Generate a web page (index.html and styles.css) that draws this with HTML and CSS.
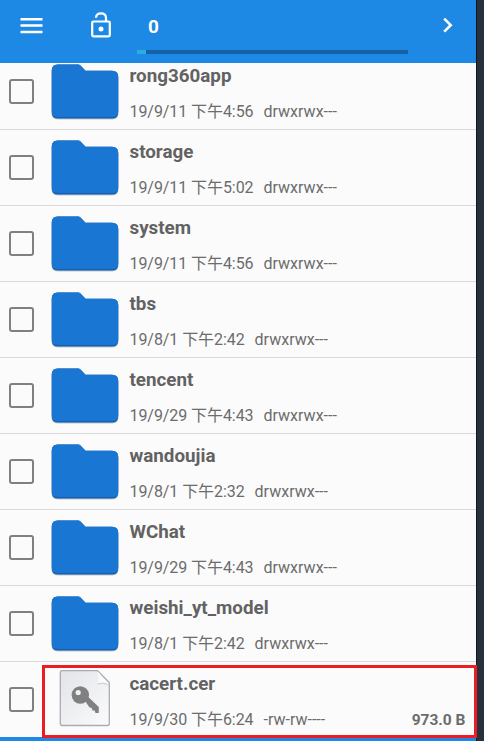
FILE: index.html
```html
<!DOCTYPE html>
<html lang="zh-CN">
<head>
<meta charset="utf-8">
<title>Files</title>
<link rel="stylesheet" href="styles.css">
</head>
<body>
<svg class="defs" aria-hidden="true">
  <defs>
    <linearGradient id="paper" x1="0" y1="0" x2="1" y2="1"><stop offset="0" stop-color="#e2e4e8"/><stop offset="1" stop-color="#fbfbfc"/></linearGradient>
    <symbol id="folder" viewBox="0 0 70 58">
      <path d="M7 2.600H28.500Q30 2.600 31 3.600L35.800 8.600H62.500Q68.500 8.600 68.500 14.600V50.500Q68.500 56.400 62.500 56.400H7.500Q1.500 56.400 1.500 50.500V8Q1.500 2.600 7 2.600Z" fill="#8aa0b8" opacity=".55"/>
      <path d="M7 1.500H28Q29.500 1.500 30.500 2.500L35.500 7.800H62Q68.200 7.800 68.200 14V49.500Q68.200 55.500 62 55.500H8Q1.800 55.500 1.800 49.500V7.500Q1.800 1.500 7.500 1.500Z" fill="#1459a3"/>
      <path d="M7.500 1.500H28Q29.500 1.500 30.500 2.500L35.500 7.800H62Q68.200 7.800 68.200 14V48.200Q68.200 54.200 62 54.200H8Q1.800 54.200 1.800 48.200V7.500Q1.800 1.500 7.500 1.500Z" fill="#1976d2"/>
    </symbol>
  </defs>
</svg>
<div class="screen">
  <header class="bar">
    <svg class="menu" viewBox="0 0 24 18"><path d="M.5 2.300H22.500M.5 8.500H22.500M.5 14.900H22.500" stroke="#fff" stroke-width="2.500"/></svg>
    <svg class="lock" viewBox="0 0 22 28"><rect x="2.200" y="10.500" width="17.600" height="14.800" rx="1.200" fill="none" stroke="#fff" stroke-width="2.200"/><path d="M6 6.800Q6.200 2.300 11 2.300Q16 2.300 16 7V10" fill="none" stroke="#fff" stroke-width="2.200"/><circle cx="11" cy="18" r="2.500" fill="#fff"/></svg>
    <div class="status"><span class="count">0</span><div class="track"><div class="fill"></div></div></div>
    <svg class="next" viewBox="0 0 12 18"><path d="M2.200 2.700L8.700 9.200L2.200 15.700" fill="none" stroke="#fff" stroke-width="2.600"/></svg>
  </header>
  <main class="list">
    <div class="row"><i class="check"></i><svg class="icon"><use href="#folder"/></svg><div class="text"><div class="name">rong360app</div><div class="meta"><span class="date">19/9/11 下午4:56</span><span>drwxrwx---</span></div></div></div>
    <div class="row"><i class="check"></i><svg class="icon"><use href="#folder"/></svg><div class="text"><div class="name">storage</div><div class="meta"><span class="date">19/9/11 下午5:02</span><span>drwxrwx---</span></div></div></div>
    <div class="row"><i class="check"></i><svg class="icon"><use href="#folder"/></svg><div class="text"><div class="name">system</div><div class="meta"><span class="date">19/9/11 下午4:56</span><span>drwxrwx---</span></div></div></div>
    <div class="row"><i class="check"></i><svg class="icon"><use href="#folder"/></svg><div class="text"><div class="name">tbs</div><div class="meta"><span class="date">19/8/1 下午2:42</span><span>drwxrwx---</span></div></div></div>
    <div class="row"><i class="check"></i><svg class="icon"><use href="#folder"/></svg><div class="text"><div class="name">tencent</div><div class="meta"><span class="date">19/9/29 下午4:43</span><span>drwxrwx---</span></div></div></div>
    <div class="row"><i class="check"></i><svg class="icon"><use href="#folder"/></svg><div class="text"><div class="name">wandoujia</div><div class="meta"><span class="date">19/8/1 下午2:32</span><span>drwxrwx---</span></div></div></div>
    <div class="row"><i class="check"></i><svg class="icon"><use href="#folder"/></svg><div class="text"><div class="name">WChat</div><div class="meta"><span class="date">19/9/29 下午4:43</span><span>drwxrwx---</span></div></div></div>
    <div class="row"><i class="check"></i><svg class="icon"><use href="#folder"/></svg><div class="text"><div class="name">weishi_yt_model</div><div class="meta"><span class="date">19/8/1 下午2:42</span><span>drwxrwx---</span></div></div></div>
    <div class="row last"><i class="check"></i>
      <svg class="icon" viewBox="0 -2 70 58"><path d="M12 -2.300H47.500L59.300 9.500V50.500Q59.300 52.500 57.300 52.500H12Q10.300 52.500 10.300 50.500V-.300Q10.300 -2.300 12 -2.300Z" fill="url(#paper)" stroke="#a9adb3" stroke-width="1.300"/><path d="M47.800 -1.500Q49.500 5 47.500 11Q53 9 58.600 10.800Z" fill="#fafafa"/><path d="M47.500 11Q53 9 58 11.500" fill="none" stroke="#c9cbcf" stroke-width="1"/><circle cx="30.300" cy="22" r="8.700" fill="#808080"/><path d="M33 25L37 22.800L48.800 34V40H45.500L44.500 37.500L42.500 37.500L41.500 34.800L39.500 34.500Z" fill="#808080"/><circle cx="28.200" cy="19.500" r="2.600" fill="#f1f1f3"/></svg>
      <div class="text"><div class="name">cacert.cer</div><div class="meta"><span class="date">19/9/30 下午6:24</span><span>-rw-rw----</span><b class="size">973.0 B</b></div></div>
    </div>
  </main>
  <footer class="bottom"></footer>
  <div class="highlight"></div>
</div>
</body>
</html>
```
FILE: styles.css
```css
* { box-sizing: border-box; }
body { margin: 0; background: #27303d; font-family: Roboto, "Noto Sans CJK SC", sans-serif; }
.defs { position: absolute; width: 0; height: 0; }
.screen { position: relative; width: 477px; height: 741px; background: #fbfbfb; border-right: 1px solid #10161e; display: flex; flex-direction: column; }
.bar { flex: none; height: 63px; background: #1e88e5; display: flex; align-items: flex-start; z-index: 1; }
.menu { width: 24px; height: 18px; margin: 17px 0 0 20px; }
.lock { width: 22px; height: 28px; margin: 11px 0 0 46px; }
.status { width: 271px; margin: 14px 0 0 25px; }
.count { display: block; height: 36px; padding-left: 11px; color: #fff; font-size: 19px; line-height: 25px; font-weight: 700; }
.track { height: 4px; background: #1660a4; }
.fill { width: 9px; height: 4px; background: #2badde; }
.next { width: 12px; height: 18px; margin: 16px 0 0 34px; }
.list { flex: none; margin-top: -9px; }
.row { height: 76px; border-bottom: 1px solid #d9d9d9; display: flex; align-items: flex-start; }
.check { flex: none; width: 25px; height: 25px; margin: 25px 0 0 9px; border: 2px solid #808080; border-radius: 3px; }
.icon { flex: none; width: 70px; height: 58px; margin: 9px 0 0 16px; overflow: visible; }
.text { flex: 1; padding-left: 9.5px; color: #626262; }
.name { margin-top: 10px; height: 35px; font-size: 18.8px; line-height: 25px; font-weight: 700; white-space: nowrap; }
.meta { display: flex; height: 24px; font-size: 16px; line-height: 25px; color: #6c6c6c; white-space: nowrap; }
.date { margin-right: 10px; letter-spacing: -0.07px; }
.size { margin-left: auto; padding-right: 10.5px; font-size: 15.5px; line-height: 26px; }
.last { height: 75px; border-bottom: 0; }
.bottom { flex: none; height: 4px; background: #1e88e5; }
.highlight { position: absolute; left: 42px; top: 665px; width: 435px; height: 73px; border: 3px solid #ed1c24; }
```
